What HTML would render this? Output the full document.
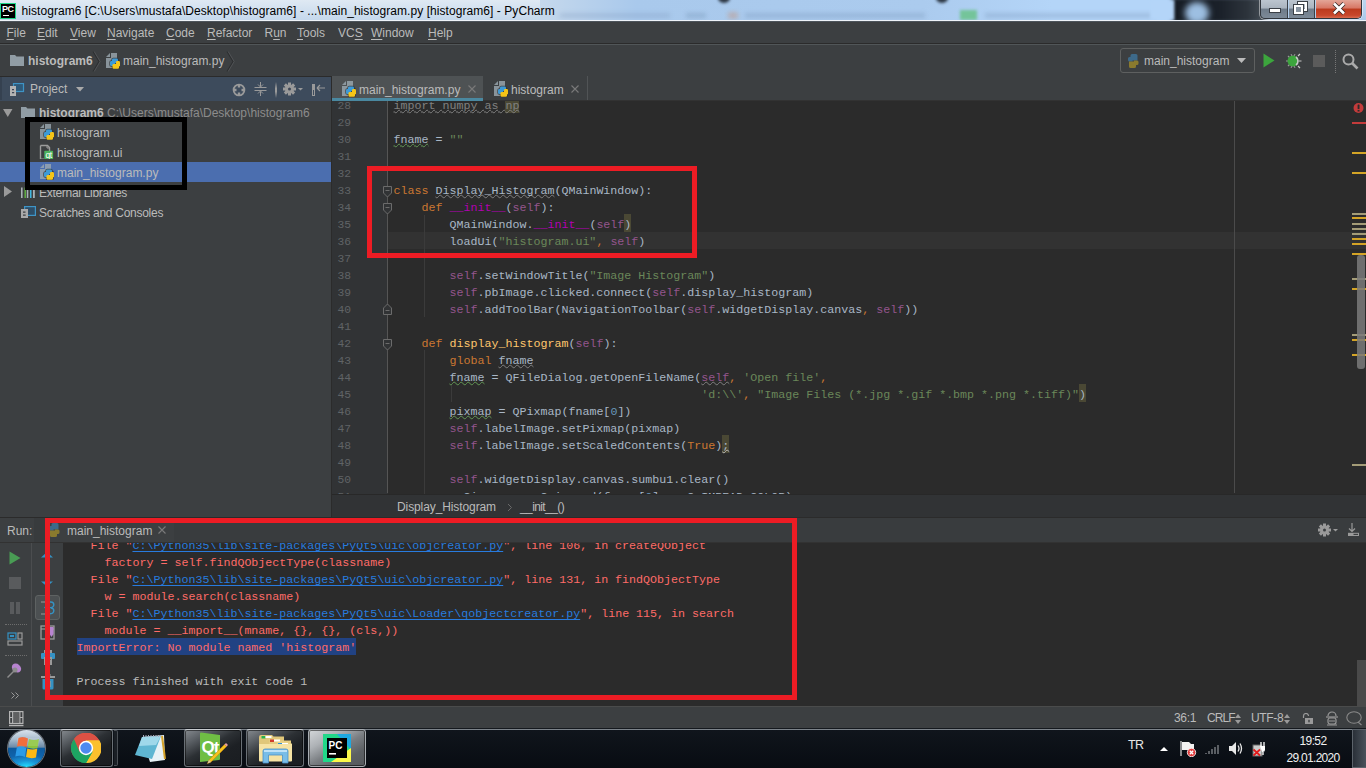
<!DOCTYPE html>
<html><head><meta charset="utf-8">
<style>
*{margin:0;padding:0;box-sizing:border-box}
html,body{width:1366px;height:768px;overflow:hidden;background:#3c3f41;font-family:"Liberation Sans",sans-serif;font-size:12px;color:#bbbbbb}
.a{position:absolute}
.mono{font-family:"Liberation Mono",monospace}
#title{left:0;top:0;width:1366px;height:22px;background:linear-gradient(#bcd6ef,#a9c8ea);}
#menu{left:0;top:22px;width:1366px;height:22px;background:#3c3f41;border-bottom:1px solid #2b2b2b}
#nav{left:0;top:44px;width:1366px;height:33px;background:#3c3f41;border-top:1px solid #515658;border-bottom:1px solid #2b2b2b}
#projhdr{left:0;top:77px;width:331px;height:25px;background:#3d4b5c;border-bottom:1px solid #2b2b2b}
#tree{left:0;top:101px;width:331px;height:416px;background:#3c3f41}
#vsplit{left:331px;top:77px;width:1px;height:440px;background:#2b2b2b}
#tabs{left:332px;top:76px;width:1034px;height:25px;background:#3c3f41;border-bottom:1px solid #323232}
#gutter{left:332px;top:101px;width:56px;height:393px;background:#313335}
#editor{left:388px;top:101px;width:978px;height:393px;background:#2b2b2b;overflow:hidden}
#crumbs{left:332px;top:494px;width:1034px;height:23px;background:#313335;border-top:1px solid #282828}
#hsplit{left:0;top:517px;width:1366px;height:1px;background:#2b2b2b}
#runhdr{left:0;top:518px;width:1366px;height:25px;background:#3c3f41;border-bottom:1px solid #323232}
#runtool1{left:0;top:543px;width:32px;height:163px;background:#3c3f41;border-right:1px solid #4b4d4f}
#runtool2{left:32px;top:543px;width:31px;height:163px;background:#3c3f41}
#console{left:63px;top:543px;width:1303px;height:163px;background:#2b2b2b;overflow:hidden}
#status{left:0;top:706px;width:1366px;height:22px;background:#3c3f41;border-top:1px solid #4a4b4b}
#taskbar{left:0;top:728px;width:1366px;height:40px;background:#0b0f17}
.mi{top:0;line-height:22px;color:#bbbbbb;white-space:pre}
u{text-decoration:underline;text-underline-offset:1.5px;text-decoration-thickness:1px}
.tr{line-height:20px;padding-top:2px;white-space:pre;color:#bbbbbb}
.ln{left:0;width:19px;text-align:right;font-family:"Liberation Mono",monospace;font-size:11.3px;line-height:17px;color:#606366;padding-top:2px}
.cl{height:17px;padding-top:2px}
.k{color:#cc7832}.s{color:#6a8759}.sf{color:#94558d}.dn{color:#b200b2}.fn{color:#ffc66d}.nu{color:#6897bb}.gr{color:#808080}
.hl{background:#4a4834;padding-top:3.9px}
.wv{text-decoration:underline wavy;text-decoration-skip-ink:none;text-underline-offset:0px;text-decoration-thickness:1px}
.er{color:#ff6b68}.lk{color:#287bde;text-decoration:underline;text-underline-offset:2px}
.sb{top:0;line-height:21px;padding-top:1px;color:#bbbbbb}
.tbb{top:1px;height:38px;border:1px solid #6a7076;border-top-color:#c8ccd0;border-radius:3px;background:linear-gradient(150deg,#868b90 0%,#5a5f64 22%,#2c3034 45%,#1d2024 65%,#1a1d21 100%);box-shadow:inset 0 0 0 1px rgba(0,0,0,.5)}
.redbox{border:5px solid #ed1c24}
.blackbox{border:5px solid #000}
.code{position:absolute;left:6px;white-space:pre;font-family:"Liberation Mono",monospace;font-size:11.67px;line-height:17px;color:#a9b7c6}
</style></head><body>
<svg width="0" height="0" style="position:absolute">
<defs>
<symbol id="py" viewBox="0 0 16 17" overflow="visible">
 <path d="M2 5L6 1V5Z" fill="#9aa7b0" fill-opacity=".82"/>
 <path d="M7 1H13V16H2V6H7Z" fill="#9aa7b0" fill-opacity=".82"/>
 <g fill="none" stroke="#2e3235" stroke-width="1.4" opacity=".8"><rect x="8" y="6.5" width="6" height="4.5" rx="1.2"/><rect x="6" y="9" width="5" height="5" rx="1.2"/><rect x="12" y="9" width="4" height="5.5" rx="1.2"/><rect x="8.5" y="12" width="6.5" height="4.8" rx="1.2"/></g>
 <g fill="#3d9ad6"><rect x="8" y="6.5" width="6" height="4.5" rx="1.2"/><rect x="6" y="9" width="5" height="5" rx="1.2"/></g>
 <g fill="#f5c518"><rect x="12" y="9" width="4" height="5.5" rx="1.2"/><rect x="8.5" y="12" width="6.5" height="4.8" rx="1.2"/></g>
</symbol>
<symbol id="qt" viewBox="0 0 16 16" overflow="visible">
 <path d="M2.5 2.5H9.5L11.5 4.5V8M2.5 2.5V16.3H6" fill="none" stroke="#9c9c9c" stroke-width="1.4"/>
 <path d="M9 2.5V5H11.5" fill="none" stroke="#9c9c9c" stroke-width="1"/>
 <rect x="6.3" y="7.8" width="8.8" height="9" rx="0.8" fill="#4db35e"/>
 <text x="10.7" y="15.2" font-family="Liberation Sans" font-size="8.5" fill="#fff" text-anchor="middle" letter-spacing="-0.3">qt</text>
</symbol>
<symbol id="folder" viewBox="0 0 16 16">
 <path d="M1 3H6L7.5 4.5H15V14H1Z" fill="#9aa7b0" opacity=".9"/>
</symbol>
<symbol id="scratch" viewBox="0 0 16 16">
 <rect x="5.5" y="1.5" width="10" height="8" fill="none" stroke="#3592c4" stroke-width="1.3"/>
 <rect x="7" y="3" width="7" height="5" fill="#3d6f8f" opacity=".7"/>
 <path d="M1 5H7V15H1Z" fill="#aaaaaa"/>
 <path d="M3 8h2v1.2H3zM3 10.5h2.2v1.2H3z" fill="#3c3f41"/>
</symbol>
<symbol id="pylogo" viewBox="0 0 16 16">
 <path id="pyh" d="M6 1H10A1.5 1.5 0 0 1 11.5 2.5V7.5H6.5V8.5H3.5A1.5 1.5 0 0 1 2 7V5.5A1.5 1.5 0 0 1 3.5 4H4.5V2.5A1.5 1.5 0 0 1 6 1Z" fill="#3d6a8a"/>
 <path d="M6 1H10A1.5 1.5 0 0 1 11.5 2.5V7.5H6.5V8.5H3.5A1.5 1.5 0 0 1 2 7V5.5A1.5 1.5 0 0 1 3.5 4H4.5V2.5A1.5 1.5 0 0 1 6 1Z" fill="#8a7a2e" transform="rotate(180 7.25 8)"/>
</symbol>
</defs></svg>
<div id="title" class="a">
<div class="a" style="left:0;top:0;width:560px;height:20px;background:linear-gradient(#dfe9f3,#c5d8ec)"></div>
<div class="a" style="left:540px;top:0;width:640px;height:20px;background:linear-gradient(90deg,#c5d8ec,#a9c9ec 15%,#abcbee 60%,#b4d5f8 80%,#b4d5f8)"></div>
<div class="a" style="left:718px;top:-7px;width:12px;height:10px;border-radius:50%;background:#2a3440;filter:blur(1.5px)"></div>
<div class="a" style="left:936px;top:-7px;width:12px;height:10px;border-radius:50%;background:#2a3440;filter:blur(1.5px)"></div>
<div class="a" style="left:560px;top:13px;width:110px;height:5px;background:rgba(110,140,175,.25);filter:blur(2px)"></div>
<div class="a" style="left:686px;top:13px;width:20px;height:5px;background:rgba(110,140,175,.35);filter:blur(2px)"></div>
<div class="a" style="left:728px;top:12px;width:10px;height:7px;background:rgba(200,140,110,.4);filter:blur(2px)"></div>
<div class="a" style="left:745px;top:13px;width:180px;height:5px;background:rgba(110,140,175,.3);filter:blur(2px)"></div>
<div class="a" style="left:960px;top:10px;width:17px;height:10px;background:#74c49a;filter:blur(1.5px)"></div>
<div class="a" style="left:985px;top:13px;width:170px;height:5px;background:rgba(110,140,175,.3);filter:blur(2px)"></div>
<div class="a" style="left:1172px;top:-3px;width:95px;height:26px;background:linear-gradient(90deg,#161c24,#1a2029 50%,#2d343c 80%,#4a525a);filter:blur(2px)"></div>
<div class="a" style="left:1185px;top:2px;width:24px;height:22px;border-radius:50%;background:#9dbfe2;filter:blur(3px)"></div>
<div class="a" style="left:1150px;top:0;width:24px;height:20px;background:#b4d5f8;filter:blur(1.5px)"></div>
<div class="a" style="left:0;top:3px;width:16px;height:16px;background:#000;border:1px solid #21d789"></div>
<div class="a" style="left:2px;top:4px;font:bold 9px 'Liberation Sans',sans-serif;color:#fff;letter-spacing:-0.6px;line-height:10px">PC</div>
<div class="a" style="left:3px;top:15px;width:6px;height:1px;background:#fff"></div>
<div class="a" style="left:21.5px;top:4px;font-size:12px;color:#000;white-space:pre;letter-spacing:0.06px">histogram6 [C:\Users\mustafa\Desktop\histogram6] - ...\main_histogram.py [histogram6] - PyCharm</div>
<div class="a" style="left:1260px;top:0;width:102px;height:19px;border:1px solid #30353c;border-top:none;border-radius:0 0 5px 5px;overflow:hidden;box-shadow:0 0 0 1px rgba(255,255,255,.45)">
 <div class="a" style="left:0;top:0;width:27px;height:18px;background:linear-gradient(#bcc5cf,#aab4bf 45%,#6e7b89 50%,#7d8a98);border-right:1px solid #3a4048"></div>
 <div class="a" style="left:28px;top:0;width:26px;height:18px;background:linear-gradient(#bcc5cf,#aab4bf 45%,#6e7b89 50%,#7d8a98);border-right:1px solid #3a4048"></div>
 <div class="a" style="left:55px;top:0;width:47px;height:18px;background:linear-gradient(#e3a597,#d77664 45%,#bb3a1e 50%,#c7472c 85%,#d86a4f)"></div>
 <div class="a" style="left:9px;top:9px;width:10px;height:3px;background:#fff;box-shadow:0 0 0 1px #3a3f46"></div>
 <div class="a" style="left:37px;top:2px;width:9px;height:9px;border:2px solid #fff;box-shadow:0 0 0 1px #3a3f46"></div>
 <div class="a" style="left:33px;top:5px;width:9px;height:9px;border:2px solid #fff;box-shadow:0 0 0 1px #3a3f46;background:#8793a0"></div>
 <svg class="a" style="left:71px;top:2px" width="14" height="13" viewBox="0 0 14 13"><path d="M2 1.5L12 11.5M12 1.5L2 11.5" stroke="#3a2a28" stroke-width="4.2"/><path d="M2 1.5L12 11.5M12 1.5L2 11.5" stroke="#fff" stroke-width="2.6"/></svg>
</div>
<div class="a" style="left:0;top:20px;width:1366px;height:1px;background:#eef3f8"></div>
<div class="a" style="left:0;top:21px;width:1366px;height:1px;background:#4d545b"></div>
</div>
<div id="menu" class="a"><div class="a mi" style="left:6.5px"><u>F</u>ile</div><div class="a mi" style="left:37px"><u>E</u>dit</div><div class="a mi" style="left:70px"><u>V</u>iew</div><div class="a mi" style="left:107px"><u>N</u>avigate</div><div class="a mi" style="left:166px"><u>C</u>ode</div><div class="a mi" style="left:207px"><u>R</u>efactor</div><div class="a mi" style="left:264.5px">R<u>u</u>n</div><div class="a mi" style="left:297px"><u>T</u>ools</div><div class="a mi" style="left:338px">VC<u>S</u></div><div class="a mi" style="left:371px"><u>W</u>indow</div><div class="a mi" style="left:428px"><u>H</u>elp</div></div>
<div id="nav" class="a">
<svg class="a" style="left:9px;top:7px" width="16" height="16"><use href="#folder"/></svg>
<div class="a" style="left:28px;top:1px;line-height:31px;font-weight:bold">histogram6</div>
<svg class="a" style="left:92px;top:6px" width="9" height="21"><path d="M1 0.5L7 10.5L1 20.5" fill="none" stroke="#2d2f31" stroke-width="1.1"/><path d="M2.2 0.5L8.2 10.5L2.2 20.5" fill="none" stroke="#5a5d5f" stroke-width=".7"/></svg>
<svg class="a" style="left:104px;top:7px" width="16" height="17"><use href="#py"/></svg>
<div class="a" style="left:123px;top:1px;line-height:31px">main_histogram.py</div>
<svg class="a" style="left:226px;top:6px" width="9" height="21"><path d="M1 0.5L7 10.5L1 20.5" fill="none" stroke="#2d2f31" stroke-width="1.1"/><path d="M2.2 0.5L8.2 10.5L2.2 20.5" fill="none" stroke="#5a5d5f" stroke-width=".7"/></svg>
<div class="a" style="left:1120px;top:3px;width:135px;height:25px;border:1px solid #5e6060;border-radius:3px;background:#3c3f41"></div>
<svg class="a" style="left:1126px;top:8px" width="16" height="16"><use href="#pylogo"/></svg>
<div class="a" style="left:1144px;top:1px;line-height:31px">main_histogram</div>
<svg class="a" style="left:1237px;top:13px" width="10" height="6"><path d="M0 0H9L4.5 5Z" fill="#bbbbbb"/></svg>
<svg class="a" style="left:1263px;top:8px" width="12" height="15"><path d="M0.5 0.5L11.5 7.5L0.5 14.5Z" fill="#3ca53d"/></svg>
<svg class="a" style="left:1285px;top:8px" width="17" height="16" viewBox="0 0 17 16"><path d="M3 3l2 2M3 13l2-2M1 8h3" stroke="#9a9a9a" stroke-width="1.2"/><path d="M8 2.5a5.5 5.5 0 0 0 0 11Z" fill="#3ca53d"/><path d="M8 2.5a5.5 5.5 0 0 1 0 11" fill="#3ca53d"/><path d="M11 4a5 5 0 0 1 0 8" fill="none" stroke="#c8c8c8" stroke-width="1.6"/><path d="M13 3l2-2M13 13l2 2M14 8h2.5" stroke="#c8c8c8" stroke-width="1.2"/><path d="M6 1l1 2M10 1l-1 2M6 15l1-2M10 15l-1-2" stroke="#9a9a9a" stroke-width="1"/></svg>
<div class="a" style="left:1313px;top:10px;width:12px;height:12px;background:#5b5b5b"></div>
<div class="a" style="left:1335px;top:5px;width:1px;height:23px;border-left:1px dotted #777"></div>
<svg class="a" style="left:1342px;top:8px" width="17" height="17" viewBox="0 0 17 17"><circle cx="6.5" cy="6.5" r="5" fill="none" stroke="#aaaaaa" stroke-width="2"/><path d="M10 10L15.5 15.5" stroke="#aaaaaa" stroke-width="2.6"/></svg>
</div>
<div id="projhdr" class="a">
<div class="a" style="left:0;top:0;width:2px;height:23px;background:#354150"></div>
<svg class="a" style="left:9px;top:6px" width="16" height="14" viewBox="0 0 16 14"><rect x="4.5" y="0.5" width="10" height="8" fill="#2f5a7a" stroke="#3e94c6" stroke-width="1.2"/><path d="M1 3H7V13H1Z" fill="#b3b3b3"/><path d="M3 6h2v1.3H3zM3 9h2.2v1.3H3z" fill="#3d4656"/></svg>
<div class="a" style="left:30px;top:1px;line-height:23px;color:#bbbbbb">Project</div>
<svg class="a" style="left:76px;top:10px" width="8" height="5"><path d="M0 0H8L4 4.5Z" fill="#aaaaaa"/></svg>
<svg class="a" style="left:232px;top:6px" width="14" height="14" viewBox="0 0 14 14"><circle cx="7" cy="7" r="5.4" fill="none" stroke="#9a9a9a" stroke-width="1.8"/><path d="M7 1.5v3M7 9.5v3M1.5 7h3M9.5 7h3" stroke="#9a9a9a" stroke-width="2.4"/></svg>
<svg class="a" style="left:254px;top:5px" width="13" height="14" viewBox="0 0 13 14"><path d="M0.5 5.5h12M0.5 8.5h12" stroke="#9a9a9a" stroke-width="1"/><path d="M6.5 0v4.5M6.5 9.5V14" stroke="#9a9a9a" stroke-width="1"/><path d="M4 2.5L6.5 5L9 2.5M4 11.5L6.5 9L9 11.5" fill="none" stroke="#9a9a9a" stroke-width="1"/></svg>
<div class="a" style="left:275px;top:5px;width:2px;height:16px;background:linear-gradient(rgba(150,150,150,0),#9a9a9a 40%,#9a9a9a 60%,rgba(150,150,150,0))"></div>
<svg class="a" style="left:283px;top:5px" width="22" height="14" viewBox="0 0 22 14"><g transform="translate(6.5,7)" fill="#9a9a9a"><circle r="4.5"/><rect x="-1.5" y="-6.5" width="3" height="13"/><rect x="-6.5" y="-1.5" width="13" height="3"/><rect x="-1.5" y="-6.5" width="3" height="13" transform="rotate(45)"/><rect x="-1.5" y="-6.5" width="3" height="13" transform="rotate(-45)"/></g><circle cx="6.5" cy="7" r="1.5" fill="#3d4656"/><path d="M15 6h5l-2.5 2.5z" fill="#9a9a9a"/></svg>
<svg class="a" style="left:312px;top:7px" width="14" height="12" viewBox="0 0 14 12"><rect x="0.5" y="0.5" width="2" height="11" fill="none" stroke="#9a9a9a" stroke-width="1"/><rect x="0" y="0" width="3" height="6" fill="#9a9a9a"/><path d="M5 4h8M5 4l3-3M5 4l3 3" fill="none" stroke="#9a9a9a" stroke-width="1.2"/></svg>
</div>
<div id="tree" class="a">
<svg class="a" style="left:3px;top:8px" width="10" height="9"><path d="M0 0H9.5L4.75 8Z" fill="#9a9a9a"/></svg>
<svg class="a" style="left:20px;top:3px" width="16" height="16"><use href="#folder"/></svg>
<div class="a tr" style="left:39px;top:0;font-weight:bold">histogram6</div>
<div class="a tr" style="left:107px;top:0;color:#8c8c8c">C:\Users\mustafa\Desktop\histogram6</div>
<svg class="a" style="left:38px;top:22px" width="16" height="17"><use href="#py"/></svg>
<div class="a tr" style="left:57px;top:20px">histogram</div>
<svg class="a" style="left:38px;top:42px" width="16" height="16"><use href="#qt"/></svg>
<div class="a tr" style="left:57px;top:40px">histogram.ui</div>
<div class="a" style="left:0;top:61px;width:331px;height:20px;background:#4b6eaf"></div>
<svg class="a" style="left:38px;top:62px" width="16" height="17"><use href="#py"/></svg>
<div class="a tr" style="left:57px;top:60px">main_histogram.py</div>
<svg class="a" style="left:4px;top:85px" width="9" height="11"><path d="M0 0L8 5.5L0 11Z" fill="#9a9a9a"/></svg>
<svg class="a" style="left:21px;top:86px" width="15" height="12" viewBox="0 0 15 12"><rect x="0" y="0.5" width="1.6" height="10.5" fill="#a9b0b5"/><rect x="3.5" y="0.5" width="1.4" height="10.5" fill="#62b543"/><rect x="5.8" y="0.5" width="1.5" height="10.5" fill="#a9b0b5"/><rect x="9" y="0.5" width="1.5" height="10.5" fill="#40b6e0"/><rect x="12" y="0.5" width="1.8" height="10.5" fill="#a9b0b5"/></svg>
<div class="a tr" style="left:39px;top:80px;letter-spacing:-0.3px">External Libraries</div>
<svg class="a" style="left:20px;top:104px" width="17" height="13" viewBox="0 0 17 13"><rect x="4.6" y="1.6" width="10.8" height="8.8" fill="#2e4d66" stroke="#3e94c6" stroke-width="1.2"/><path d="M1 4H8V13.5H1Z" fill="#a9a9a9"/><path d="M3 6.5h2.5v1.3H3zM3 9.5h2.7v1.3H3z" fill="#3c3f41"/></svg>
<div class="a tr" style="left:39px;top:100px;letter-spacing:-0.27px">Scratches and Consoles</div>
</div>
<div id="vsplit" class="a"></div>
<div id="tabs" class="a">
<div class="a" style="left:0;top:0;width:151px;height:24px;background:#4e5254"></div>
<div class="a" style="left:0;top:22px;width:151px;height:3px;background:#4a88a0"></div>
<svg class="a" style="left:8px;top:4px" width="16" height="17"><use href="#py"/></svg>
<div class="a" style="left:27px;top:3px;line-height:22px">main_histogram.py</div>
<svg class="a" style="left:136px;top:9px" width="8" height="8"><path d="M0.5 0.5L7.5 7.5M7.5 0.5L0.5 7.5" stroke="#7a7a7a" stroke-width="1.1"/></svg>
<div class="a" style="left:255px;top:0;width:1px;height:24px;background:#515456"></div>
<svg class="a" style="left:160px;top:4px" width="16" height="17"><use href="#py"/></svg>
<div class="a" style="left:179px;top:3px;line-height:22px">histogram</div>
<svg class="a" style="left:239px;top:9px" width="8" height="8"><path d="M0.5 0.5L7.5 7.5M7.5 0.5L0.5 7.5" stroke="#7a7a7a" stroke-width="1.1"/></svg>
</div>
<div id="gutter" class="a"><div class="a ln" style="top:-5px">28</div><div class="a ln" style="top:12px">29</div><div class="a ln" style="top:29px">30</div><div class="a ln" style="top:46px">31</div><div class="a ln" style="top:63px">32</div><div class="a ln" style="top:80px">33</div><div class="a ln" style="top:97px">34</div><div class="a ln" style="top:114px">35</div><div class="a ln" style="top:131px">36</div><div class="a ln" style="top:148px">37</div><div class="a ln" style="top:165px">38</div><div class="a ln" style="top:182px">39</div><div class="a ln" style="top:199px">40</div><div class="a ln" style="top:216px">41</div><div class="a ln" style="top:233px">42</div><div class="a ln" style="top:250px">43</div><div class="a ln" style="top:267px">44</div><div class="a ln" style="top:284px">45</div><div class="a ln" style="top:301px">46</div><div class="a ln" style="top:318px">47</div><div class="a ln" style="top:335px">48</div><div class="a ln" style="top:352px">49</div><div class="a ln" style="top:369px">50</div><div class="a ln" style="top:386px">51</div><div class="a" style="left:55px;top:0;width:1px;height:392px;background:#555555"></div>
</div>
<div id="editor" class="a">
<div class="a" style="left:0;top:131px;width:978px;height:17px;background:#323232"></div>
<div class="a" style="left:846px;top:0;width:1px;height:392px;background:#4b4b4b"></div>
<div class="a" style="left:36px;top:114px;width:1px;height:102px;background:#3b3b3b"></div>
<div class="a" style="left:36px;top:249px;width:1px;height:150px;background:#3b3b3b"></div>
<div class="a" style="left:63px;top:284px;width:1px;height:17px;background:#3b3b3b"></div>
<div class="code" style="top:-5px;left:5.5px"><div class="cl"><span class="wv" style="text-decoration-color:#808080"><span class="gr">import numpy as </span><span class="gr hl">np</span></span></div><div class="cl"></div><div class="cl"><span class="wv" style="text-decoration-color:#629755">fname</span> = <span class="s">""</span></div><div class="cl"></div><div class="cl"></div><div class="cl"><span class="k">class</span> <span class="wv" style="text-decoration-color:#808080">Display_Histogram</span>(QMainWindow):</div><div class="cl">    <span class="k">def</span> <span class="dn">__init__</span>(<span class="sf">self</span>):</div><div class="cl">        QMainWindow.<span class="dn">__init__</span>(<span class="sf">self</span><span class="hl">)</span></div><div class="cl">        loadUi(<span class="s">"histogram.ui"</span><span class="k">,</span> <span class="sf">self</span>)</div><div class="cl"></div><div class="cl">        <span class="sf">self</span>.setWindowTitle(<span class="s">"Image Histogram"</span>)</div><div class="cl">        <span class="sf">self</span>.pbImage.clicked.connect(<span class="sf">self</span>.display_histogram)</div><div class="cl">        <span class="sf">self</span>.addToolBar(NavigationToolbar(<span class="sf">self</span>.widgetDisplay.canvas<span class="k">,</span> <span class="sf">self</span>))</div><div class="cl"></div><div class="cl">    <span class="k">def</span> <span class="fn">display_histogram</span>(<span class="sf">self</span>):</div><div class="cl">        <span class="k">global</span> <span class="wv" style="text-decoration-color:#808080">fname</span></div><div class="cl">        <span class="wv" style="text-decoration-color:#629755">fname</span> = QFileDialog.getOpenFileName(<span class="wv" style="text-decoration-color:#808080"><span class="sf">self</span></span><span class="k">,</span> <span class="s">'Open file'</span><span class="k">,</span></div><div class="cl">                                            <span class="s">'d:\\'</span><span class="k">,</span> <span class="s">"Image Files (*.jpg *.gif *.bmp *.png *.tiff)"</span><span class="hl">)</span></div><div class="cl">        <span class="wv" style="text-decoration-color:#629755">pixmap</span> = QPixmap(fname[<span class="nu">0</span>])</div><div class="cl">        <span class="sf">self</span>.labelImage.setPixmap(pixmap)</div><div class="cl">        <span class="sf">self</span>.labelImage.setScaledContents(<span class="k">True</span>)<span class="hl wv" style="text-decoration-color:#bbb">;</span></div><div class="cl"></div><div class="cl">        <span class="sf">self</span>.widgetDisplay.canvas.sumbu1.clear()</div><div class="cl">        cv2image = cv2.imread(fname[<span class="nu">0</span>]<span class="k">,</span> cv2.IMREAD_COLOR)</div></div><svg class="a" style="left:965px;top:1px" width="12" height="12" viewBox="0 0 12 12"><circle cx="5.5" cy="6" r="5" fill="#c43b3b"/><rect x="4.6" y="2.5" width="1.9" height="4.6" rx=".6" fill="#2b2b2b"/><rect x="4.6" y="7.9" width="1.9" height="1.6" fill="#2b2b2b"/></svg>
<div class="a" style="left:964px;top:21px;width:14px;height:2px;background:#c43b3b"></div><div class="a" style="left:964px;top:51px;width:14px;height:2px;background:#d4a426"></div><div class="a" style="left:964px;top:71px;width:14px;height:2px;background:#d4a426"></div><div class="a" style="left:964px;top:112px;width:14px;height:2px;background:#a49c77"></div><div class="a" style="left:964px;top:116px;width:14px;height:2px;background:#d4a426"></div><div class="a" style="left:964px;top:122px;width:14px;height:2px;background:#a49c77"></div><div class="a" style="left:964px;top:127px;width:14px;height:2px;background:#a49c77"></div><div class="a" style="left:964px;top:132px;width:14px;height:2px;background:#a49c77"></div><div class="a" style="left:964px;top:137px;width:14px;height:2px;background:#d4a426"></div><div class="a" style="left:964px;top:142px;width:14px;height:2px;background:#d4a426"></div><div class="a" style="left:964px;top:152px;width:14px;height:2px;background:#d4a426"></div><div class="a" style="left:964px;top:177px;width:14px;height:2px;background:#a49c77"></div><div class="a" style="left:964px;top:187px;width:14px;height:2px;background:#d4a426"></div><div class="a" style="left:964px;top:233px;width:14px;height:2px;background:#a49c77"></div><div class="a" style="left:964px;top:238px;width:14px;height:2px;background:#d4a426"></div><div class="a" style="left:964px;top:253px;width:14px;height:2px;background:#d4a426"></div><div class="a" style="left:964px;top:363px;width:14px;height:2px;background:#a49c77"></div><div class="a" style="left:969px;top:154px;width:8px;height:114px;border-radius:3px;background:#7a7a7a;opacity:.85"></div></div>
<svg class="a" style="left:382px;top:186px" width="11" height="12" viewBox="0 0 11 12"><path d="M1.5 0.5H9.5V7L5.5 11L1.5 7Z" fill="#313335" stroke="#6b6b6b" stroke-width="1"/><path d="M3.5 4.5H7.5" stroke="#6b6b6b"/></svg><svg class="a" style="left:382px;top:203px" width="11" height="12" viewBox="0 0 11 12"><path d="M1.5 0.5H9.5V7L5.5 11L1.5 7Z" fill="#313335" stroke="#6b6b6b" stroke-width="1"/><path d="M3.5 4.5H7.5" stroke="#6b6b6b"/></svg><svg class="a" style="left:382px;top:303px" width="11" height="12" viewBox="0 0 11 12"><path d="M1.5 11.5H9.5V5L5.5 1L1.5 5Z" fill="#313335" stroke="#6b6b6b" stroke-width="1"/><path d="M3.5 7.5H7.5" stroke="#6b6b6b"/></svg><svg class="a" style="left:382px;top:339px" width="11" height="12" viewBox="0 0 11 12"><path d="M1.5 0.5H9.5V7L5.5 11L1.5 7Z" fill="#313335" stroke="#6b6b6b" stroke-width="1"/><path d="M3.5 4.5H7.5" stroke="#6b6b6b"/></svg><div id="crumbs" class="a">
<div class="a" style="left:65px;top:1px;line-height:22px;letter-spacing:-0.1px">Display_Histogram</div>
<svg class="a" style="left:175px;top:8px" width="6" height="9"><path d="M1 1L4.5 4.5L1 8" fill="none" stroke="#6a6a6a" stroke-width="1"/></svg>
<div class="a" style="left:188px;top:1px;line-height:22px;letter-spacing:-0.6px">__init__()</div>
</div>
<div id="hsplit" class="a"></div>
<div id="runhdr" class="a">
<div class="a" style="left:34px;top:0;width:11px;height:24px;background:#383b3d"></div>
<div class="a" style="left:174px;top:0;width:1192px;height:24px;background:#393c3e"></div>
<div class="a" style="left:7px;top:2px;line-height:23px">Run:</div>
<svg class="a" style="left:47px;top:4px" width="16" height="16"><use href="#pylogo"/></svg>
<div class="a" style="left:67px;top:2px;line-height:23px">main_histogram</div>
<svg class="a" style="left:158px;top:8px" width="8" height="8"><path d="M0.5 0.5L7.5 7.5M7.5 0.5L0.5 7.5" stroke="#7a7a7a" stroke-width="1.1"/></svg>
<svg class="a" style="left:1318px;top:5px" width="22" height="14" viewBox="0 0 22 14"><g transform="translate(6.5,7)" fill="#9a9a9a"><circle r="4.5"/><rect x="-1.5" y="-6.5" width="3" height="13"/><rect x="-6.5" y="-1.5" width="13" height="3"/><rect x="-1.5" y="-6.5" width="3" height="13" transform="rotate(45)"/><rect x="-1.5" y="-6.5" width="3" height="13" transform="rotate(-45)"/></g><circle cx="6.5" cy="7" r="1.5" fill="#3c3f41"/><path d="M15 6h5l-2.5 2.5z" fill="#9a9a9a"/></svg>
<svg class="a" style="left:1347px;top:5px" width="13" height="14" viewBox="0 0 13 14"><path d="M5 0V8.5M2 5.5L5 8.5L8 5.5" fill="none" stroke="#9a9a9a" stroke-width="1.2"/><rect x="1" y="9.8" width="11" height="3.2" fill="#9a9a9a"/><rect x="6.5" y="10.8" width="4.5" height="1.2" fill="#3c3f41"/></svg>
</div>
<div id="runtool1" class="a">
<svg class="a" style="left:9px;top:8px" width="12" height="14"><path d="M0.5 0.5L11.5 7L0.5 13.5Z" fill="#499c54"/></svg>
<div class="a" style="left:9px;top:34px;width:12px;height:12px;background:#595b5d"></div>
<div class="a" style="left:10px;top:59px;width:4px;height:12px;background:#595b5d"></div>
<div class="a" style="left:16px;top:59px;width:4px;height:12px;background:#595b5d"></div>
<div class="a" style="left:5px;top:81px;width:22px;height:1px;border-top:1px dotted #6d6d6d"></div>
<svg class="a" style="left:7px;top:89px" width="16" height="14" viewBox="0 0 16 14"><rect x="1" y="1" width="8" height="6" fill="none" stroke="#3592c4" stroke-width="1.2"/><rect x="3" y="3" width="4" height="2" fill="#3592c4"/><rect x="11" y="1" width="4" height="6" fill="none" stroke="#9a9a9a" stroke-width="1.2"/><rect x="1" y="9" width="14" height="4" fill="none" stroke="#9a9a9a" stroke-width="1.2"/></svg>
<div class="a" style="left:5px;top:112px;width:22px;height:1px;border-top:1px dotted #6d6d6d"></div>
<svg class="a" style="left:6px;top:119px" width="17" height="17" viewBox="0 0 17 17"><ellipse cx="10.5" cy="6" rx="5" ry="4" transform="rotate(40 10.5 6)" fill="#b784d0"/><circle cx="9" cy="8" r="2.5" fill="#8d8d8d"/><path d="M7.5 9.5L1.5 15.5" stroke="#8d8d8d" stroke-width="1.5"/></svg>
<svg class="a" style="left:11px;top:149px" width="9" height="7"><path d="M0.5 0.5L3.5 3.5L0.5 6.5M4.5 0.5L7.5 3.5L4.5 6.5" fill="none" stroke="#9a9a9a" stroke-width="1"/></svg>
</div>
<div id="runtool2" class="a">
<svg class="a" style="left:9px;top:9px" width="12" height="6"><path d="M0 5.5L6 0L12 5.5Z" fill="#3592c4"/></svg>
<svg class="a" style="left:9px;top:38px" width="12" height="6"><path d="M0 0.5L6 5.5L12 0.5Z" fill="#3592c4"/></svg>
<div class="a" style="left:3px;top:52px;width:25px;height:25px;background:#4c5052;border:1px solid #5e6262;border-radius:3px"></div>
<svg class="a" style="left:8px;top:57px" width="16" height="16" viewBox="0 0 16 16"><path d="M1 2H8M1 14H8" stroke="#9a9a9a" stroke-width="1.2"/><path d="M9 2H11A2.8 2.8 0 0 1 11 7.6H5M7 5.6L5 7.6L7 9.6" fill="none" stroke="#3592c4" stroke-width="1.4"/><path d="M11 8A2.8 2.8 0 0 1 11 13.6H8M10 11.6L8 13.6L10 15.6" fill="none" stroke="#3592c4" stroke-width="1.4"/></svg>
<svg class="a" style="left:8px;top:82px" width="16" height="15" viewBox="0 0 16 15"><rect x="1" y="1" width="13" height="13" fill="none" stroke="#9a9a9a" stroke-width="1.3"/><path d="M1 4H14" stroke="#9a9a9a" stroke-width="1.2"/><path d="M9.5 2V9L11.5 12L13.5 9V2Z" fill="#b784d0"/></svg>
<svg class="a" style="left:8px;top:107px" width="16" height="15" viewBox="0 0 16 15"><rect x="4" y="0" width="8" height="3" fill="#9a9a9a"/><rect x="1" y="3" width="14" height="6" rx="1" fill="#3592c4"/><rect x="4" y="7" width="8" height="8" fill="#9a9a9a"/><rect x="5.5" y="9" width="5" height="1" fill="#3c3f41"/></svg>
<svg class="a" style="left:9px;top:131px" width="14" height="16" viewBox="0 0 14 16"><rect x="0" y="2" width="14" height="2" fill="#9a9a9a"/><rect x="4.5" y="0" width="5" height="2.5" fill="#9a9a9a"/><path d="M1.5 5h11v9a1.5 1.5 0 0 1-1.5 1.5H3A1.5 1.5 0 0 1 1.5 14Z" fill="#3592c4"/><path d="M5 7v6M9 7v6" stroke="#9a9a9a" stroke-width="1.4"/></svg>
</div>
<div id="console" class="a"><div class="code" style="left:13.5px;top:-7px;color:#bbbbbb"><div class="cl"><span class="er">  File "</span><span class="lk">C:\Python35\lib\site-packages\PyQt5\uic\objcreator.py</span><span class="er">", line 106, in createQObject</span></div><div class="cl"><span class="er">    factory = self.findQObjectType(classname)</span></div><div class="cl"><span class="er">  File "</span><span class="lk">C:\Python35\lib\site-packages\PyQt5\uic\objcreator.py</span><span class="er">", line 131, in findQObjectType</span></div><div class="cl"><span class="er">    w = module.search(classname)</span></div><div class="cl"><span class="er">  File "</span><span class="lk">C:\Python35\lib\site-packages\PyQt5\uic\Loader\qobjectcreator.py</span><span class="er">", line 115, in search</span></div><div class="cl"><span class="er">    module = __import__(mname, {}, {}, (cls,))</span></div><div class="cl"><span class="er" style="background:#214283;padding-top:3px">ImportError: No module named 'histogram'</span></div><div class="cl"></div><div class="cl">Process finished with exit code 1</div></div><div class="a" style="left:1294px;top:117px;width:9px;height:46px;background:#4a4a4a"></div></div>
<div id="status" class="a">
<svg class="a" style="left:9px;top:4px" width="15" height="16" viewBox="0 0 15 16"><rect x="4" y="1.5" width="6" height="10" fill="#5f6061"/><rect x="0.6" y="0.6" width="13.3" height="11.8" fill="none" stroke="#b4b4b4" stroke-width="1.2"/><path d="M3.6 0.6V12.4M10.9 0.6V12.4M0.6 6.5H3.6M10.9 6.5H13.9" stroke="#b4b4b4" stroke-width="1.1"/><rect x="0" y="13.8" width="14.5" height="1.4" fill="#b4b4b4"/></svg>
<div class="a sb" style="left:1174px;letter-spacing:-0.35px">36:1</div>
<div class="a sb" style="left:1207px;letter-spacing:-0.9px">CRLF</div>
<svg class="a" style="left:1235px;top:7px" width="6" height="10"><path d="M0 4L3 0L6 4ZM0 6L3 10L6 6Z" fill="#9a9a9a"/></svg>
<div class="a sb" style="left:1251px;letter-spacing:-0.35px">UTF-8</div>
<svg class="a" style="left:1284px;top:7px" width="6" height="10"><path d="M0 4L3 0L6 4ZM0 6L3 10L6 6Z" fill="#9a9a9a"/></svg>
<svg class="a" style="left:1302px;top:6px" width="11" height="11" viewBox="0 0 11 11"><path d="M1.5 5V3a2.5 2.5 0 0 1 5 0" fill="none" stroke="#9a9a9a" stroke-width="1.2"/><rect x="3" y="5" width="8" height="6" fill="#9a9a9a"/><rect x="6.3" y="6.8" width="1.4" height="2.5" fill="#3c3f41"/></svg>
<svg class="a" style="left:1325px;top:4px" width="14" height="15" viewBox="0 0 14 15"><path d="M3 5a4 4 0 0 1 8 0" fill="none" stroke="#9a9a9a" stroke-width="1.2"/><path d="M1 6h12" stroke="#9a9a9a" stroke-width="1.2"/><rect x="3" y="7" width="8" height="6" rx="2" fill="none" stroke="#9a9a9a" stroke-width="1.2"/><path d="M4 10h6M2 14h10" stroke="#9a9a9a" stroke-width="1.2"/></svg>
<svg class="a" style="left:1346px;top:4px" width="17" height="15" viewBox="0 0 17 15"><ellipse cx="8" cy="6.5" rx="7.2" ry="5.8" fill="none" stroke="#8a8a8a" stroke-width="1.1"/><path d="M12 11L15.5 14" stroke="#8a8a8a" stroke-width="1.1"/></svg>
</div>
<div id="taskbar" class="a">
<div class="a" style="left:0;top:0;width:1366px;height:1px;background:#15191e"></div>
<div class="a" style="left:0;top:1px;width:1366px;height:1px;background:#7d848b"></div>
<div class="a" style="left:0;top:2px;width:1366px;height:38px;background:linear-gradient(#10151c,#080c12)"></div>
<!-- start orb -->
<div class="a" style="left:8px;top:2px;width:37px;height:37px;border-radius:50%;background:radial-gradient(ellipse 60% 35% at 50% 100%,#22e0ff 0,rgba(30,170,230,.6) 50%,rgba(20,100,180,0) 100%),linear-gradient(#d9e3ec 0%,#a9bccd 25%,#6d8ba8 46%,#0d5a9e 50%,#0f63ab 70%,#1a86cf 100%);box-shadow:0 0 0 1px #6d737a"></div>
<svg class="a" style="left:14px;top:9px" width="26" height="22" viewBox="0 0 26 22"><path d="M4.5 1Q9 -0.5 14 1.5L12.5 10Q7.5 8 3 9.5Z" fill="#f05a22"/><path d="M15 2Q20 4 25 2L23.5 11Q18.5 12.5 13.5 10.5Z" fill="#8cc43c"/><path d="M2.8 10.5Q7.3 9 12.3 11L11 20Q6 18 1.3 19.5Z" fill="#2a9be8"/><path d="M13.3 11.5Q18.3 13.5 23.3 11.5L22 20.5Q17 22 12 20Z" fill="#fdb913"/><path d="M3 1L25 1L25 9L3 9Z" fill="#fff" opacity=".12"/></svg>
<!-- buttons -->
<div class="a tbb" style="left:60px;width:53px"></div>
<div class="a" style="left:114px;top:2px;width:4px;height:36px;border:1px solid #4a4f55;border-left:none;border-radius:0 2px 2px 0;background:#1a1f25"></div>
<div class="a tbb" style="left:184px;width:58px"></div>
<div class="a tbb" style="left:246px;width:58px"></div>
<div class="a tbb" style="left:308px;width:58px;background:linear-gradient(150deg,#d4d7da 0%,#aeb2b6 28%,#7a7e82 52%,#5c6064 75%,#54585c 100%);border-color:#a8adb2"></div>
<!-- chrome -->
<svg class="a" style="left:71px;top:5px" width="30" height="30" viewBox="-15 -15 30 30">
<path d="M0 0L0 -15A15 15 0 0 1 12.99 7.5Z" fill="#fbc02d"/>
<path d="M0 0L12.99 7.5A15 15 0 0 1 -12.99 7.5Z" fill="#1da462"/>
<path d="M0 0L-12.99 7.5A15 15 0 0 1 0 -15Z" fill="#dd5144"/>
<path d="M0 -15A15 15 0 0 1 12.99 7.5L6.5 3.75A7.5 7.5 0 0 0 0 -7.5H12.99Z" fill="#dd5144" opacity="0"/>
<path d="M-6.5 -3.75L-12.99 7.5" stroke="none"/>
<path d="M0 -7.5H13.5A15 15 0 0 0 -12 -9L-6.5 3.75Z" fill="#dd5144"/>
<path d="M6.5 3.75L0 15A15 15 0 0 0 13.5 -7.5H0Z" fill="#fbc02d"/>
<path d="M-6.5 3.75L-12 -9A15 15 0 0 0 0 15L6.5 3.75Z" fill="#1da462"/>
<circle r="7.2" fill="#fff"/><circle r="5.7" fill="#4d8af0"/>
</svg>
<!-- notepad -->
<svg class="a" style="left:134px;top:5px" width="32" height="30" viewBox="0 0 32 30"><path d="M8 4L30 2L31 27L16 29Z" fill="#e8f2f6"/><path d="M28 3L31 26" stroke="#d4a22a" stroke-width="2"/><path d="M8 4L27 3L18 26L1 22Z" fill="#5fb6d2"/><path d="M8 4L27 3L22 12L5 13Z" fill="#9fd8ea"/><path d="M9 3h18" stroke="#aab" stroke-width="2" stroke-dasharray="1 1.5"/></svg>
<!-- qt -->
<svg class="a" style="left:198px;top:4px" width="32" height="32" viewBox="0 0 32 32"><path d="M2 1.5Q2 0.5 3 0.5L22 3V27Q22 28 21 28L2 30Z" fill="#6fbe44"/><text x="3.5" y="21" font-family="Liberation Sans" font-weight="bold" font-size="17" fill="#fff" letter-spacing="-1">Qt</text><path d="M28.5 14.5L13 30L9.5 31.5L11 28L26.5 12.5Z" fill="#f6c21c" stroke="#c98a10" stroke-width=".6"/><path d="M26.5 12.5L28.5 14.5L30 13L28 11Z" fill="#e8a0a0"/><path d="M11 28L9.5 31.5L13 30Z" fill="#d8c8a8"/></svg>
<!-- explorer -->
<svg class="a" style="left:258px;top:5px" width="36" height="32" viewBox="0 0 36 32"><path d="M1 4Q1 2 3 2H14L15.5 3.5H26V26H1Z" fill="#e0c77a"/><path d="M3.5 3h4v2.5h-4z" fill="#2bb24c"/><path d="M7.5 3h6v2h-6z" fill="#fff"/><path d="M11 6H22L23.5 7.5H33V27H11Z" fill="#e6cd82"/><path d="M12 6.5h4v2.5h-4z" fill="#d03c2c"/><path d="M16 6.5h6v2h-6z" fill="#fff"/><path d="M19 9H29L30.5 10.5H34V28H19Z" fill="#ead488"/><path d="M20 10h4v2h-4z" fill="#2b8fd8"/><path d="M24 10h6v2h-6z" fill="#fff"/><path d="M1 11H34V27.5Q34 28.5 33 28.5H2Q1 28.5 1 27.5Z" fill="#f6e3a4"/><path d="M5 18Q5 16 7 16H28Q30 16 30 18V30H24.5V22H10.5V30H5Z" fill="#79bde8" stroke="#4a90c8" stroke-width=".8"/><path d="M6 17H29V19H6Z" fill="#bfe2f8"/></svg>
<!-- pycharm -->
<svg class="a" style="left:323px;top:6px" width="28" height="28" viewBox="0 0 28 28"><path d="M0 0H28V28H0Z" fill="#21d789"/><path d="M14 0H28V16Z" fill="#1ea8e0"/><path d="M28 14V28H8Z" fill="#fcf84a"/><rect x="4" y="4" width="20" height="20" fill="#000"/><text x="5.5" y="15" font-family="Liberation Sans" font-weight="bold" font-size="10" fill="#fff">PC</text><rect x="6" y="19" width="7" height="1.6" fill="#fff"/></svg>
<!-- tray -->
<div class="a" style="left:1128px;top:9px;font-size:12.5px;color:#e8e8e8;line-height:16px;letter-spacing:-0.6px">TR</div>
<svg class="a" style="left:1160px;top:19px" width="8" height="4"><path d="M0 4L4 0L8 4Z" fill="#fff"/></svg>
<svg class="a" style="left:1180px;top:13px" width="17" height="16" viewBox="0 0 17 16"><path d="M1 0V15" stroke="#ddd" stroke-width="1.2"/><path d="M2 1H9L11 3H14V9H2Z" fill="#f2f2f2"/><circle cx="11.5" cy="11.5" r="4.2" fill="#e23b3b" stroke="#fff" stroke-width=".8"/><path d="M9.8 9.8L13.2 13.2M13.2 9.8L9.8 13.2" stroke="#fff" stroke-width="1.3"/></svg>
<svg class="a" style="left:1205px;top:16px" width="15" height="11" viewBox="0 0 15 11"><path d="M1 10v-1M4 10V7M7 10V5M10 10V3M13 10V1" stroke="#6e7277" stroke-width="1.6"/></svg>
<svg class="a" style="left:1228px;top:13px" width="15" height="15" viewBox="0 0 15 15"><path d="M1 5H4L8 1V14L4 10H1Z" fill="#e8e8e8"/><path d="M10 4.5Q12 7.5 10 10.5M12 2.5Q15 7.5 12 12.5" fill="none" stroke="#e8e8e8" stroke-width="1.3"/></svg>
<svg class="a" style="left:1252px;top:13px" width="16" height="16" viewBox="0 0 16 16"><rect x="1" y="4" width="9" height="11" fill="#ccc" stroke="#666"/><path d="M8 5H13V9Q13 11 10.5 11H10Z" fill="#fff"/><path d="M9 1V5M12 1V5M11 11V14" stroke="#fff" stroke-width="1.3"/><path d="M1.5 8.5L8 14.5M8 8.5L1.5 14.5" stroke="#e21b1b" stroke-width="1.8"/></svg>
<div class="a" style="left:1285px;top:5px;width:56px;text-align:center;font-size:12px;line-height:16px;color:#f0f0f0;letter-spacing:-0.6px">19:52</div>
<div class="a" style="left:1282px;top:22px;width:62px;text-align:center;font-size:12px;line-height:16px;color:#f0f0f0;letter-spacing:-0.7px">29.01.2020</div>
<div class="a" style="left:1352px;top:1px;width:14px;height:39px;border:1px solid #5c636b;border-right:none;background:linear-gradient(90deg,#2a3038,#4a525b)"></div>
</div>
<div class="a redbox" style="left:367px;top:166px;width:330px;height:92px"></div>
<div class="a redbox" style="left:45px;top:518px;width:752px;height:182px"></div>
<div class="a blackbox" style="left:25px;top:117px;width:162px;height:73px"></div>
</body></html>
